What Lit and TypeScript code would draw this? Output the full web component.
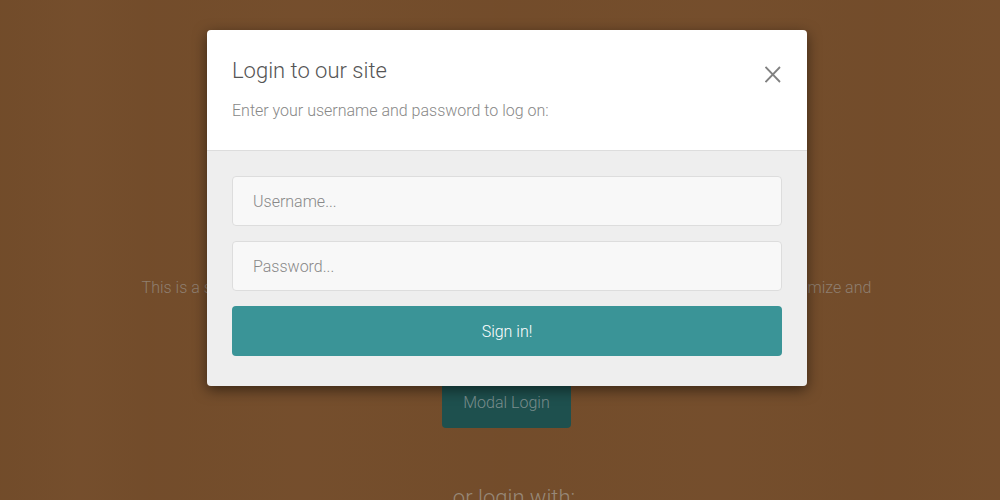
import { LitElement, html, css } from "lit";
import { customElement } from "lit/decorators.js";

@customElement("app-root")
export class AppRoot extends LitElement {
  static styles = css`
    :host {
      display: block;
      width: 1000px;
      height: 500px;
      overflow: hidden;
      position: relative;
      font-family: Roboto, "Liberation Sans", sans-serif;
      font-weight: 300;
      background-color: #744d2b;
      background-image: linear-gradient(
        90deg,
        rgba(0, 0, 0, 0.02) 0,
        rgba(255, 255, 255, 0.006) 8%,
        rgba(0, 0, 0, 0.01) 15%,
        rgba(255, 255, 255, 0.008) 30%,
        rgba(0, 0, 0, 0.01) 50%,
        rgba(255, 255, 255, 0.008) 72%,
        rgba(0, 0, 0, 0.012) 88%,
        rgba(255, 255, 255, 0.006) 100%
      );
    }
    .page {
      display: flex;
      flex-direction: column;
      align-items: center;
      width: 1013px;
      padding-top: 278px;
      box-sizing: border-box;
    }
    .desc {
      margin: 0;
      font-size: 16px;
      line-height: 20px;
      color: #8f7f70;
      white-space: nowrap;
    }
    .open {
      margin-top: 78px;
      width: 129px;
      height: 52px;
      border-radius: 4px;
      background: #1e504e;
      color: #7a8e8d;
      font-size: 16px;
      display: flex;
      align-items: center;
      justify-content: center;
    }
    .or {
      margin: 55px 0 0 15px;
      font-size: 22px;
      line-height: 30px;
      color: #978878;
    }
    .shadow {
      position: absolute;
      left: 207px;
      top: 30px;
      width: 600px;
      height: 356px;
      border-radius: 4px;
      box-shadow: 0 4px 14px rgba(0, 0, 0, 0.5);
    }
    .modal {
      position: absolute;
      left: 207px;
      top: 30px;
      width: 600px;
      height: 356px;
      border-radius: 4px;
      overflow: hidden;
      display: flex;
      flex-direction: column;
    }
    .head {
      height: 121px;
      box-sizing: border-box;
      background: #fff;
      border-bottom: 1px solid #ddd;
      padding: 26px 25px 0;
      display: flex;
      justify-content: space-between;
      align-items: flex-start;
    }
    h3 {
      margin: 0;
      font-size: 22px;
      font-weight: 300;
      line-height: 30px;
      color: #555;
    }
    .sub {
      margin: 15px 0 0;
      font-size: 16px;
      line-height: 20px;
      color: #888;
    }
    .close {
      margin: 10px 1px 0 0;
      width: 16px;
      height: 17px;
      display: block;
    }
    .close line {
      stroke: #808080;
      stroke-width: 1.8;
    }
    .body {
      flex: 1;
      background: #eee;
      padding: 25px 25px 0;
      display: flex;
      flex-direction: column;
      gap: 15px;
    }
    input {
      height: 50px;
      box-sizing: border-box;
      width: 100%;
      border: 1px solid #ddd;
      border-radius: 4px;
      background: #f8f8f8;
      padding: 0 20px;
      margin: 0;
      outline: none;
      font: 300 16px Roboto, "Liberation Sans", sans-serif;
      color: #888;
    }
    input::placeholder {
      color: #888;
      opacity: 1;
    }
    button {
      height: 50px;
      border: 0;
      border-radius: 4px;
      background: #3a9497;
      color: #fff;
      padding: 0;
      font: 300 16px Roboto, "Liberation Sans", sans-serif;
    }
  `;

  render() {
    return html`
      <div class="page">
        <p class="desc">This is a simple free responsive login form made with Bootstrap. Download it on AZMIND, customize and</p>
        <div class="open">Modal Login</div>
        <div class="or">or login with:</div>
      </div>
      <div class="shadow"></div>
      <div class="modal">
        <div class="head">
          <div>
            <h3>Login to our site</h3>
            <p class="sub">Enter your username and password to log on:</p>
          </div>
          <svg class="close" viewBox="0 0 16 17" aria-label="Close">
            <line x1="0.5" y1="1" x2="15" y2="16"></line>
            <line x1="15" y1="1" x2="0.5" y2="16"></line>
          </svg>
        </div>
        <div class="body">
          <input placeholder="Username..." />
          <input placeholder="Password..." />
          <button>Sign in!</button>
        </div>
      </div>
    `;
  }
}
